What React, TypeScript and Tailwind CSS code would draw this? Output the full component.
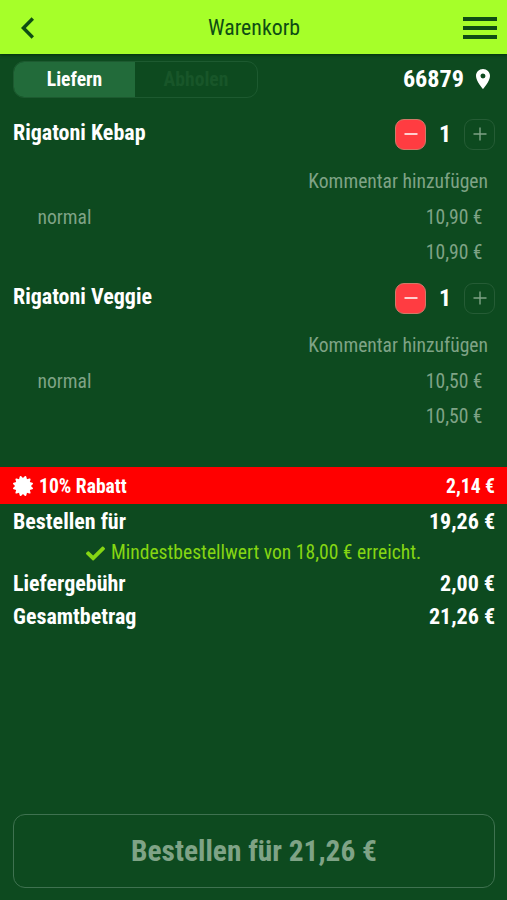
import React from "react";
import { FaCertificate, FaCheck } from "react-icons/fa";
import { MdLocationOn } from "react-icons/md";

type Item = { name: string; option: string; price: string; count: number };

const items: Item[] = [
  { name: "Rigatoni Kebap", option: "normal", price: "10,90 €", count: 1 },
  { name: "Rigatoni Veggie", option: "normal", price: "10,50 €", count: 1 },
];

function CartItem({ item }: { item: Item }) {
  return (
    <section className="flex h-[164px] flex-col">
      <div className="flex h-[60px] items-center pr-3 pl-[13px]">
        <h2 className="grow pb-[2px] text-[22px] font-bold text-white">{item.name}</h2>
        <button className="flex size-[31px] items-center justify-center rounded-[9px] border border-[#cf7a68] bg-[#ff3c41]">
          <svg viewBox="0 0 14 14" className="size-[14px]" stroke="#ffffff" strokeWidth="1.5">
            <path d="M0.5 7h13" />
          </svg>
        </button>
        <span className="w-[38px] text-center text-[24px] font-bold text-white">{item.count}</span>
        <button className="flex size-[31px] items-center justify-center rounded-[9px] border border-[#255c35]">
          <svg viewBox="0 0 14 14" className="size-[14px]" stroke="#7fa386" strokeWidth="1.4">
            <path d="M7 0.5v13M0.5 7h13" />
          </svg>
        </button>
      </div>
      <div className="flex h-[34px] items-center justify-end pt-px pr-[19px]">Kommentar hinzufügen</div>
      <div className="flex h-[38px] items-center justify-between pt-[2px] pr-[24.5px] pl-[37.5px]">
        <span>{item.option}</span>
        <span>{item.price}</span>
      </div>
      <div className="flex h-[32px] items-center justify-end pt-[2px] pr-[24.5px]">{item.price}</div>
    </section>
  );
}

function TotalRow({ label, value }: { label: string; value: string }) {
  return (
    <div className="flex h-[33px] items-center justify-between pt-[2px] pr-3 pl-[13px] text-[22px] font-bold text-white">
      <span>{label}</span>
      <span>{value}</span>
    </div>
  );
}

export default function App() {
  return (
    <div className="flex h-[900px] w-[507px] flex-col overflow-hidden bg-[#0d4a1f] font-['Roboto_Condensed',Roboto,sans-serif] text-[19.6px] leading-none text-[#7fa386] [font-stretch:75%]">
      <header className="flex h-[54px] shrink-0 items-center justify-between bg-[#a6ff29] pt-[2px] pr-[10px] pl-[21px] text-[#0e4d14] shadow-[0_1px_3px_#00300a]">
        <svg viewBox="0 0 13 22" className="h-[22px] w-[24px]" fill="none" stroke="currentColor" strokeWidth="3.4" preserveAspectRatio="xMinYMid meet">
          <path d="M11.8 1.5 2.4 11l9.4 9.5" />
        </svg>
        <h1 className="text-[21.8px]">Warenkorb</h1>
        <span className="flex w-[34px] flex-col gap-[5px]">
          <i className="h-1 bg-current" />
          <i className="h-1 bg-current" />
          <i className="h-1 bg-current" />
        </span>
      </header>
      <div className="mt-[7px] flex h-[36px] shrink-0 items-center justify-between pr-[12px] pl-[13px]">
        <div className="flex h-[37px] w-[245px] overflow-hidden rounded-[11px] border border-[#1d5a30] font-bold">
          <span className="flex w-[121px] items-center justify-center bg-[#226b3a] pt-[2px] text-white">Liefern</span>
          <span className="flex grow items-center justify-center pt-[2px] text-[#185629]">Abholen</span>
        </div>
        <span className="flex items-center gap-[7px] text-[24.2px] font-bold text-white">
          66879
          <MdLocationOn className="size-[24px]" />
        </span>
      </div>
      <div className="mt-[7px]">
        {items.map((item) => (
          <CartItem key={item.name} item={item} />
        ))}
      </div>
      <div className="mt-[35px] flex h-[37px] shrink-0 items-center bg-[#ff0000] pr-3 pl-[13px] font-bold text-white">
        <FaCertificate className="mr-[6px] size-[20px]" />
        <span className="grow pt-[2px]">10% Rabatt</span>
        <span className="pt-[2px]">2,14 €</span>
      </div>
      <TotalRow label="Bestellen für" value="19,26 €" />
      <div className="flex h-[29px] items-center justify-center gap-[6px] pt-[3px] text-[#85d613]">
        <FaCheck className="size-[19px]" />
        Mindestbestellwert von 18,00 € erreicht.
      </div>
      <TotalRow label="Liefergebühr" value="2,00 €" />
      <TotalRow label="Gesamtbetrag" value="21,26 €" />
      <button className="mt-auto mr-3 mb-3 ml-[13px] flex h-[74px] shrink-0 items-center justify-center rounded-[12px] border-[1.5px] border-[#3f7250] pt-[2px] text-[29.4px] font-bold">
        Bestellen für 21,26 €
      </button>
    </div>
  );
}
